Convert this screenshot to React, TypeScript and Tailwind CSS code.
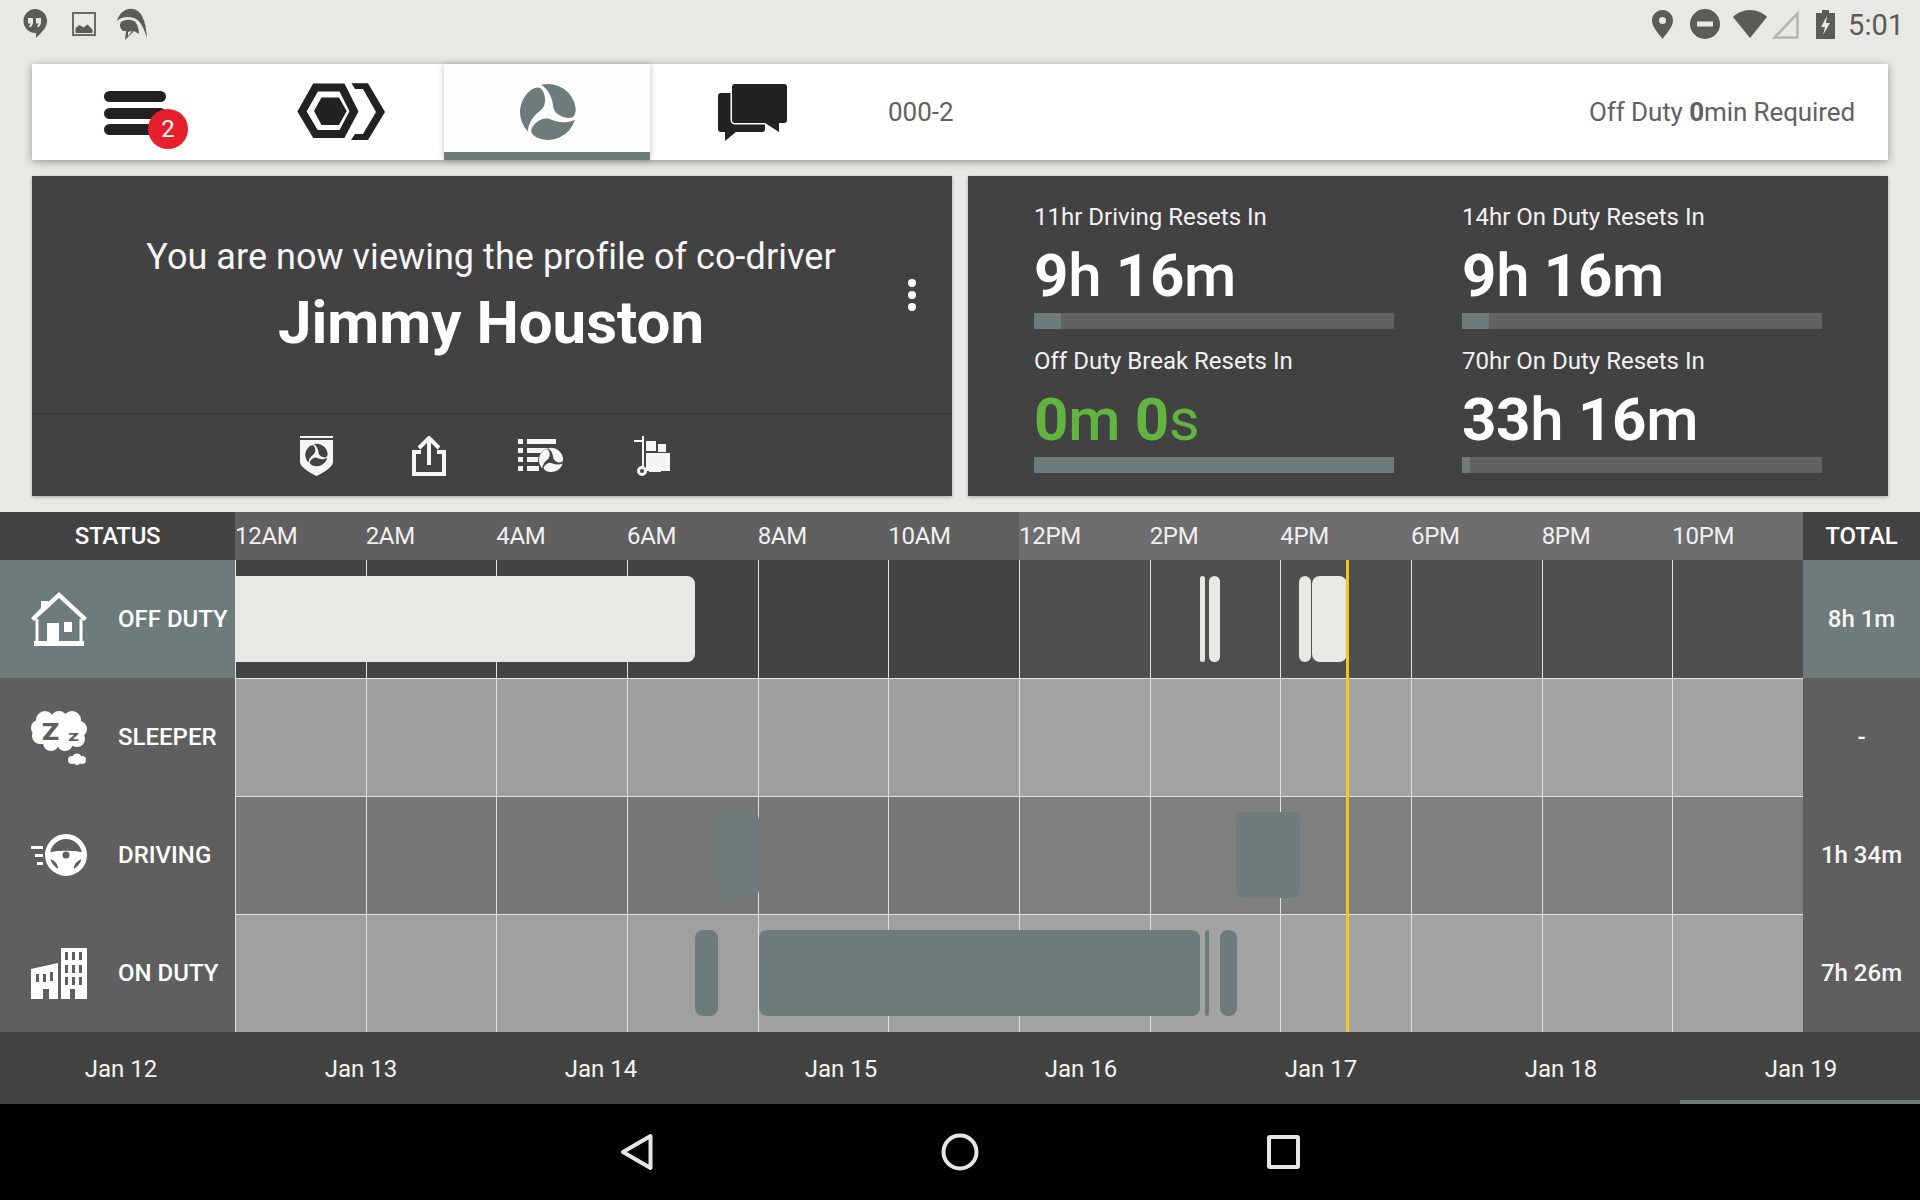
import { Fragment } from "react";

const SLATE = "#6e7b7b";

// three blade logo, drawn around 0,0
const Blades = ({ size, fill, x, y }: { size: number; fill: string; x?: number; y?: number }) => {
  const blade = "M-6.700,-27.200 A28,28 0 0 1 27.800,-3 C27.500,3 26,6 21,6 C14,6 5,1 5,-7 C4,-14 1,-22 -6.700,-27.200Z";
  const inner = (
    <>
      <path d={blade} fill={fill} />
      <path d={blade} fill={fill} transform="rotate(120)" />
      <path d={blade} fill={fill} transform="rotate(240)" />
    </>
  );
  if (x !== undefined) {
    return <g transform={`translate(${x} ${y}) scale(${size / 60})`}>{inner}</g>;
  }
  return (
    <svg width={size} height={size} viewBox="-30 -30 60 60">
      {inner}
    </svg>
  );
};

const StatusLeftIcons = () => (
  <div className="flex items-center pl-[23px]">
    <svg width="24" height="30" viewBox="0 0 24 30">
      <path d="M12 0a12 12 0 0 1 12 12c0 7-6 12-11 17v-5A12 12 0 0 1 12 0z" fill="#5b5b57" />
      <path d="M5 9h5v5.500L8 18H6l1.500-3.500H5zM13 9h5v5.500L16 18h-2l1.500-3.500H13z" fill="#e8e8e4" />
    </svg>
    <svg className="ml-[25px]" width="24" height="24" viewBox="0 0 24 24">
      <rect x="1" y="1" width="22" height="22" fill="none" stroke="#6a6a66" strokeWidth="2" />
      <path d="M3.500 21v-5l4-3 4 2.500 4-3 5 5V21z" fill="#5b5b57" />
    </svg>
    <svg className="ml-[20px]" width="31" height="32" viewBox="0 0 31 32">
      <path d="M1 13C3 5 10 0 17 1c8 1 13 11 14 29-3-10-7-18-13-20C11 8 5 9 1 13z" fill="#5b5b57" />
      <path d="M5 14c5-3 12-3 15 1 2 3 3 7 3 11l-5-3-9 9 1-9-3 0c-3-3-4-6-2-9z" fill="#5b5b57" />
      <path d="M12 24l4-1-4 5z" fill="#e8e8e4" />
    </svg>
  </div>
);

const StatusRightIcons = () => (
  <div className="flex items-center pr-[16px]">
    <svg width="21" height="29" viewBox="0 0 21 29">
      <path d="M10.500 0C16 0 21 4.500 21 10.500 21 17 14 24 10.500 29 7 24 0 17 0 10.500 0 4.500 5 0 10.500 0z" fill="#5b5b57" />
      <circle cx="10.500" cy="10.500" r="3.500" fill="#e8e8e4" />
    </svg>
    <svg className="ml-[17px]" width="30" height="30" viewBox="0 0 30 30">
      <circle cx="15" cy="15" r="15" fill="#5b5b57" />
      <rect x="7" y="12.500" width="16" height="5" fill="#e8e8e4" />
    </svg>
    <svg className="ml-[13px]" width="34" height="28" viewBox="0 0 34 28">
      <path d="M17 28L0 7C4 3 10 0 17 0s13 3 17 7z" fill="#5b5b57" />
    </svg>
    <svg className="ml-[4px]" width="28" height="29" viewBox="0 0 28 29">
      <path d="M26.500 3.500V27.500H3.500z" fill="none" stroke="#b4b4b0" strokeWidth="2.500" />
    </svg>
    <svg className="ml-[17px]" width="19" height="29" viewBox="0 0 19 29">
      <path d="M6 0h7v3h6v26H0V3h6z" fill="#5b5b57" />
      <path d="M11 6L5 17h4l-2 8 7-12h-4z" fill="#e8e8e4" />
    </svg>
    <span className="ml-[13px] mt-[3px] text-[29px] leading-none text-[#5b5b57]">5:01</span>
  </div>
);

const HexLogo = () => (
  <svg width="88" height="58" viewBox="12 8 88 58">
    <path d="M17 36.500L30.500 12.500H57L69 36.500 57 59H30.500z" fill="none" stroke="#222" strokeWidth="8" />
    <path d="M29 36L36.500 22.500H54L61.700 36 54 50H36.500z" fill="#222" />
    <path d="M66.500 8.300H83L100 37 83 65H66L70 59H78L91 37 78 14H70z" fill="#222" />
  </svg>
);

const ChatIcon = () => (
  <svg width="71" height="57" viewBox="0 0 71 57">
    <path d="M5 9h44v36a3 3 0 0 1-3 3H20L9 57v-9H5a3 3 0 0 1-3-3V12a3 3 0 0 1 3-3z" fill="#222" />
    <path d="M19 0h49a3 3 0 0 1 3 3v33a3 3 0 0 1-3 3h-5v9L49 39H19a3 3 0 0 1-3-3V3a3 3 0 0 1 3-3z" fill="#222" stroke="#fff" strokeWidth="3" paintOrder="stroke" />
  </svg>
);

const NavBar = () => (
  <div className="mx-8 flex h-24 bg-white shadow-[0_2px_8px_rgba(0,0,0,0.35)]">
    <div className="flex w-[206px] items-center justify-center">
      <div className="relative mt-[2px] flex h-[44px] w-[62px] flex-col justify-between">
        <div className="h-[11px] rounded-full bg-[#222]" />
        <div className="h-[11px] rounded-full bg-[#222]" />
        <div className="h-[11px] rounded-full bg-[#222]" />
        <span className="absolute left-[44px] top-[18px] flex h-10 w-10 items-center justify-center rounded-full bg-[#e5202a] text-2xl text-white">
          2
        </span>
      </div>
    </div>
    <div className="flex w-[206px] items-center justify-center">
      <HexLogo />
    </div>
    <div className="flex w-[206px] items-center justify-center border-b-8 border-[#6e7b7b] bg-[#fdfdfd] pl-[2px] pt-2 shadow-[0_0_6px_rgba(0,0,0,0.25)]">
      <Blades size={60} fill={SLATE} />
    </div>
    <div className="flex w-[206px] items-center justify-center pr-[4px]">
      <ChatIcon />
    </div>
    <div className="flex flex-1 items-center justify-between pl-8 pr-[33px] pt-[1px] text-[26px] text-[#616161]">
      <span>000-2</span>
      <span className="tracking-[-0.1px]">
        Off Duty <span className="font-bold">0</span>min Required
      </span>
    </div>
  </div>
);

const ProfileCard = () => (
  <div className="flex w-[920px] flex-col bg-[#424242] shadow-[0_1px_3px_rgba(0,0,0,0.3)]">
    <div className="relative flex h-[239px] flex-col items-center border-b-2 border-[#3a3a3a] pr-[2px] pt-[59px]">
      <div className="text-[36px] leading-[44px] tracking-[0.05px] text-[#f5f5f5]">You are now viewing the profile of co-driver</div>
      <div className="mt-2 text-[60px] font-bold leading-[72px] text-white">Jimmy Houston</div>
      <div className="absolute right-[36px] top-[103px] flex flex-col gap-1">
        <div className="h-2 w-2 rounded-full bg-white" />
        <div className="h-2 w-2 rounded-full bg-white" />
        <div className="h-2 w-2 rounded-full bg-white" />
      </div>
    </div>
    <div className="flex flex-1 items-center pl-[228px]">
      <div className="flex w-[112px] justify-center">
        <svg width="33" height="40" viewBox="0 0 33 40">
          <rect x="0" y="0" width="33" height="2" fill="#f5f5f5" />
          <path d="M0 4h33v22c0 5-10 11-16.500 14C10 37 0 31 0 26z" fill="#f5f5f5" />
          <Blades size={24} fill="#424242" x={16.5} y={19} />
        </svg>
      </div>
      <div className="flex w-[112px] justify-center pl-[2px]">
        <svg width="34" height="40" viewBox="0 0 34 40">
          <path d="M9 16H2v22h30V16h-7" fill="none" stroke="#f5f5f5" strokeWidth="4" />
          <path d="M17 29V3M7 12L17 2l10 10" fill="none" stroke="#f5f5f5" strokeWidth="4" />
        </svg>
      </div>
      <div className="flex w-[112px] justify-center">
        <svg width="45" height="34" viewBox="0 0 45 34">
          <path d="M0 0h5v5H0zM9 0h29v5H9zM0 9h5v5H0zM9 9h22v5H9zM0 18h5v5H0zM9 18h13v5H9zM0 27h5v5H0zM9 27h12v5H9z" fill="#f5f5f5" />
          <circle cx="33" cy="22" r="13" fill="#424242" />
          <Blades size={26} fill="#f5f5f5" x={33} y={21} />
        </svg>
      </div>
      <div className="flex w-[112px] justify-center">
        <svg width="36" height="40" viewBox="0 0 36 40">
          <path d="M0 4h8V0h2v31H8V6H0z" fill="#f5f5f5" />
          <path d="M12 5h10v10H12zM24 8h8v8h-8zM12 17h24v18H12z" fill="#f5f5f5" />
          <path d="M15 34h12v2H15z" fill="#f5f5f5" />
          <circle cx="8" cy="35" r="3.500" fill="none" stroke="#f5f5f5" strokeWidth="3" />
        </svg>
      </div>
    </div>
  </div>
);

type Reset = {
  label: string;
  parts: [string, string][];
  fill: number;
  green?: boolean;
};

const resets: Reset[] = [
  { label: "11hr Driving Resets In", parts: [["9", "h"], ["16", "m"]], fill: 27 },
  { label: "14hr On Duty Resets In", parts: [["9", "h"], ["16", "m"]], fill: 27 },
  { label: "Off Duty Break Resets In", parts: [["0", "m"], ["0", "s"]], fill: 360, green: true },
  { label: "70hr On Duty Resets In", parts: [["33", "h"], ["16", "m"]], fill: 8 },
];

const ResetsCard = () => (
  <div className="grid w-[920px] grid-cols-[428px_360px] content-start gap-y-[17px] bg-[#424242] pl-[66px] pt-[26px] shadow-[0_1px_3px_rgba(0,0,0,0.3)]">
    {resets.map((r) => (
      <div key={r.label} className="w-[360px]">
        <div className="text-[24px] leading-[30px] text-[#f2f2f2]">{r.label}</div>
        <div className={`mt-[12px] text-[60px] leading-[64px] tracking-[-0.3px] ${r.green ? "text-[#62b33f]" : "text-white"}`}>
          {r.parts.map(([num, unit], i) => (
            <Fragment key={i}>
              {i > 0 && " "}
              <span className="font-bold">{num}</span>
              <span className={unit === "s" ? "font-normal" : "font-medium"}>{unit}</span>
            </Fragment>
          ))}
        </div>
        <div className="mt-[5px] h-4 bg-[#626262]">
          <div className="h-full bg-[#6e7b7b]" style={{ width: r.fill }} />
        </div>
      </div>
    ))}
  </div>
);

const HouseIcon = () => (
  <svg width="56" height="54" viewBox="0 0 56 54">
    <path d="M0 26L10 16V9h7v1L28 0l28 26-3 3L28 6 3 29z" fill="#fff" />
    <path d="M6 27v23M50 27v23" stroke="#fff" strokeWidth="3" />
    <path d="M3 49h50v5H3z" fill="#fff" />
    <path d="M16 31h12v19H16zM33 30h8v10h-8z" fill="#fff" />
  </svg>
);

const SleeperIcon = () => (
  <svg width="56" height="55" viewBox="0 0 56 55">
    <g fill="#fff">
      <circle cx="14" cy="10" r="9" />
      <circle cx="28" cy="9" r="8" />
      <circle cx="41" cy="10" r="9" />
      <circle cx="48" cy="19" r="8" />
      <circle cx="46" cy="29" r="8" />
      <circle cx="34" cy="33" r="8" />
      <circle cx="20" cy="33" r="8" />
      <circle cx="9" cy="26" r="8" />
      <circle cx="8" cy="18" r="8" />
      <rect x="10" y="10" width="36" height="24" />
      <circle cx="41" cy="50" r="4" />
      <circle cx="46" cy="48" r="4.500" />
      <circle cx="51" cy="50" r="4" />
      <circle cx="46" cy="52" r="3" />
    </g>
    <text x="11" y="30" fontFamily="Roboto, sans-serif" fontWeight="900" fontSize="24" textLength="17" lengthAdjust="spacingAndGlyphs" fill="#5f5f5f">Z</text>
    <text x="37" y="31" fontFamily="Roboto, sans-serif" fontWeight="700" fontSize="14" textLength="11" lengthAdjust="spacingAndGlyphs" fill="#5f5f5f">z</text>
  </svg>
);

const DrivingIcon = () => (
  <svg width="56" height="42" viewBox="0 0 56 42">
    <circle cx="35" cy="21" r="18.500" fill="none" stroke="#fff" strokeWidth="5" />
    <path d="M17 19c6-3 30-3 36 0l-1 6c-3 0-8 3-9 8l-1 7H28l-1-7c-1-5-6-8-9-8z" fill="#fff" />
    <circle cx="35" cy="21" r="3.500" fill="#5f5f5f" />
    <path d="M0 12h12v3H0zM4 20h8v3H4zM6 28h6v3H6z" fill="#fff" />
  </svg>
);

const OnDutyIcon = () => (
  <svg width="56" height="51" viewBox="0 0 56 51">
    <path fillRule="evenodd" d="M30 0h26v51H44V41h-5v10h-9zM34 4v8h3V4zM41 4v8h3V4zM48 4v8h3V4zM34 17v8h3v-8zM41 17v8h3v-8zM48 17v8h3v-8zM34 29v8h3v-8zM41 29v8h3v-8zM48 29v8h3v-8z" fill="#fff" />
    <path fillRule="evenodd" d="M0 21l27-6v36H18V41h-6v10H0zM5 26v8h3v-8zM12 26v8h3v-8zM19 24v9h3v-9z" fill="#fff" />
  </svg>
);

type Bar = { x: number; w: number; round: string };

type Lane = {
  name: string;
  total: string;
  icon: React.ReactNode;
  dark: string;
  light: string;
  bar: string;
  active?: boolean;
  first?: boolean;
  bars: Bar[];
};

// x and w in pixels from the left edge of the chart
const lanes: Lane[] = [
  {
    name: "OFF DUTY",
    total: "8h 1m",
    icon: <HouseIcon />,
    dark: "bg-[#434343]",
    light: "bg-[#4f4f4f]",
    bar: "bg-[#e8e8e4]",
    active: true,
    first: true,
    bars: [
      { x: 0, w: 460, round: "rounded-r-lg" },
      { x: 965, w: 5, round: "rounded-[3px]" },
      { x: 974, w: 11, round: "rounded-md" },
      { x: 1064, w: 12, round: "rounded-md" },
      { x: 1077, w: 35, round: "rounded-lg" },
    ],
  },
  {
    name: "SLEEPER",
    total: "-",
    icon: <SleeperIcon />,
    dark: "bg-[#9f9f9f]",
    light: "bg-[#a3a3a3]",
    bar: "",
    bars: [],
  },
  {
    name: "DRIVING",
    total: "1h 34m",
    icon: <DrivingIcon />,
    dark: "bg-[#767676]",
    light: "bg-[#7f7f7f]",
    bar: "bg-[#6e7b7b]",
    bars: [
      { x: 483, w: 41, round: "rounded-lg" },
      { x: 1001, w: 64, round: "rounded-lg" },
    ],
  },
  {
    name: "ON DUTY",
    total: "7h 26m",
    icon: <OnDutyIcon />,
    dark: "bg-[#a0a0a0]",
    light: "bg-[#a3a3a3]",
    bar: "bg-[#6e7b7b]",
    bars: [
      { x: 460, w: 23, round: "rounded-lg" },
      { x: 524, w: 441, round: "rounded-lg" },
      { x: 970, w: 4, round: "rounded-[2px]" },
      { x: 985, w: 17, round: "rounded-lg" },
    ],
  },
];

const hours = ["12AM", "2AM", "4AM", "6AM", "8AM", "10AM", "12PM", "2PM", "4PM", "6PM", "8PM", "10PM"];
const dates = ["Jan 12", "Jan 13", "Jan 14", "Jan 15", "Jan 16", "Jan 17", "Jan 18", "Jan 19"];

const Chart = () => (
  <div className="flex flex-col">
    <div className="flex h-12 items-center text-[24px] text-white">
      <div className="flex h-full w-[235px] items-center justify-center bg-[#424242] font-medium tracking-[-0.3px]">STATUS</div>
      <div className="grid h-full w-[1568px] grid-cols-12 tracking-[-0.3px] text-[#f0f0f0]">
        {hours.map((h, i) => (
          <div key={h} className={`flex items-center ${i < 6 ? "bg-[#606060]" : "bg-[#6e6e6e]"}`}>
            {h}
          </div>
        ))}
      </div>
      <div className="flex h-full w-[117px] items-center justify-center bg-[#424242] font-medium">TOTAL</div>
    </div>
    <div className="flex">
      <div className="w-[235px]">
        {lanes.map((l) => (
          <div key={l.name} className={`flex h-[118px] items-center pl-[31px] ${l.active ? "bg-[#6e7b7b]" : "bg-[#5f5f5f]"}`}>
            <div className="flex w-[87px] shrink-0">{l.icon}</div>
            <div className="text-[24px] font-medium text-white">{l.name}</div>
          </div>
        ))}
      </div>
      <div className="relative w-[1568px]">
        {lanes.map((l) => (
          <div key={l.name} className="relative grid h-[118px] grid-cols-12">
            {hours.map((h, i) => (
              <div
                key={h}
                className={`border-l border-[#e2e2e2] ${l.first ? "" : "border-t"} ${i < 6 ? l.dark : l.light}`}
              />
            ))}
            {l.bars.map((b) => (
              <div
                key={b.x}
                className={`absolute top-4 h-[86px] ${l.bar} ${b.round}`}
                style={{ left: b.x, width: b.w }}
              />
            ))}
          </div>
        ))}
        <div className="absolute bottom-0 left-[1111px] top-0 w-[3px] bg-[#f0c91f]" />
      </div>
      <div className="w-[117px]">
        {lanes.map((l) => (
          <div
            key={l.name}
            className={`flex h-[118px] items-center justify-center text-[24px] font-medium text-[#f5f5f5] ${l.active ? "bg-[#6e7b7b]" : "bg-[#5f5f5f]"}`}
          >
            {l.total}
          </div>
        ))}
      </div>
    </div>
    <div className="grid h-[72px] grid-cols-8 bg-[#424242] pt-[2px] text-[24px] text-[#f2f2f2]">
      {dates.map((d, i) => (
        <div key={d} className={`flex items-center justify-center pl-[2px] ${i === 7 ? "border-b-4 border-[#6e7b7b] pt-1" : ""}`}>
          {d}
        </div>
      ))}
    </div>
  </div>
);

const SystemNav = () => (
  <div className="flex h-24 items-center gap-[288px] bg-black pl-[620px]">
    <svg width="33" height="38" viewBox="0 0 33 38">
      <path d="M30.500 3L3 19l27.500 16z" fill="none" stroke="#e6e6e6" strokeWidth="4" strokeLinejoin="round" />
    </svg>
    <svg width="38" height="38" viewBox="0 0 38 38">
      <circle cx="19" cy="19" r="16.500" fill="none" stroke="#e6e6e6" strokeWidth="4" />
    </svg>
    <svg width="33" height="34" viewBox="0 0 33 34">
      <rect x="2" y="2" width="29" height="30" rx="1" fill="none" stroke="#e6e6e6" strokeWidth="4" />
    </svg>
  </div>
);

export default function App() {
  return (
    <div className="flex h-[1200px] w-[1920px] flex-col overflow-hidden bg-[#e8e8e4] font-['Roboto',sans-serif]">
      <div className="flex h-16 items-start justify-between pt-2">
        <StatusLeftIcons />
        <StatusRightIcons />
      </div>
      <NavBar />
      <div className="mx-8 mb-4 mt-4 flex h-80 gap-4">
        <ProfileCard />
        <ResetsCard />
      </div>
      <Chart />
      <SystemNav />
    </div>
  );
}
